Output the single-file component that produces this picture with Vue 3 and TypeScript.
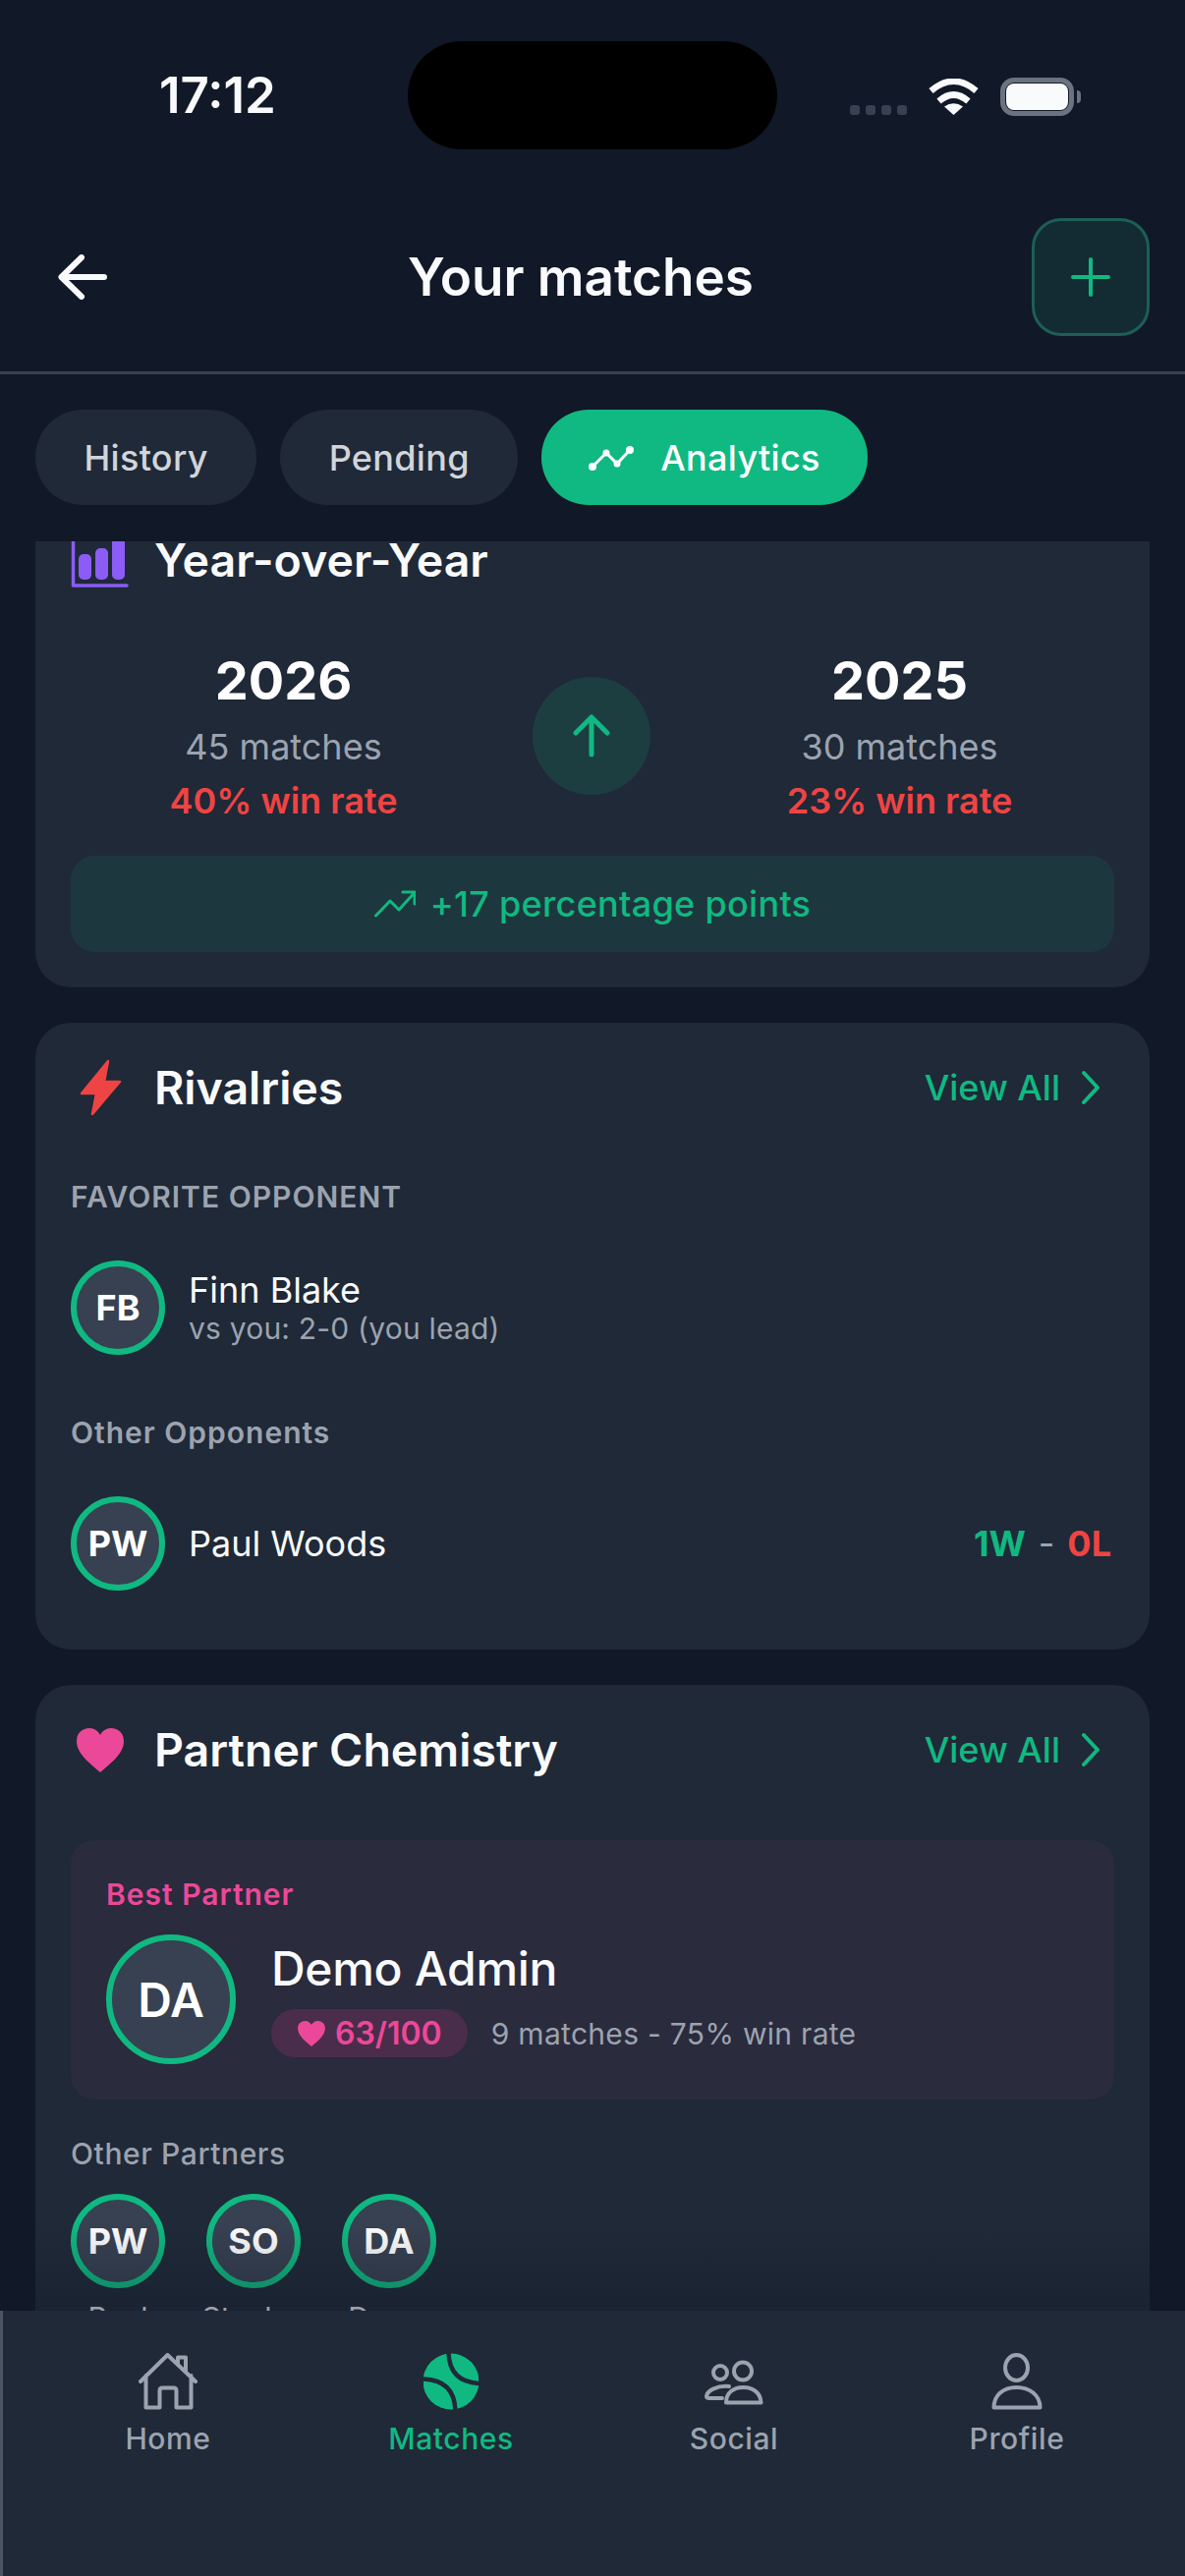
<script setup lang="ts">
interface Tab { label: string; active?: boolean }
const tabs: Tab[] = [{ label: 'History' }, { label: 'Pending' }, { label: 'Analytics', active: true }]
const years = [
  { year: '2026', matches: '45 matches', rate: '40% win rate' },
  { year: '2025', matches: '30 matches', rate: '23% win rate' },
]
const partners = [
  { initials: 'PW', name: 'Paul' },
  { initials: 'SO', name: 'Stanley' },
  { initials: 'DA', name: 'Demo' },
]
const nav = ['Home', 'Matches', 'Social', 'Profile']
</script>

<template>
  <div class="app">
    <div class="status">
      <span class="time">17:12</span>
      <div class="island"></div>
      <div class="status-right">
        <div class="signal"><i></i><i></i><i></i><i></i></div>
        <svg class="wifi" width="51" height="37" viewBox="0 0 51 37" fill="none">
          <path d="M2.500 12.500Q25.500 -7 48.500 12.500" stroke="#f8fafc" stroke-width="6.500" />
          <path d="M10.500 23Q25.500 10 40.500 23" stroke="#f8fafc" stroke-width="6.500" />
          <path d="M25.500 37L16 28.500Q25.500 22 35 28.500Z" fill="#f8fafc" />
        </svg>
        <div class="battery"><div class="battery-fill"></div></div>
      </div>
    </div>

    <header class="header">
      <div class="back">
        <svg width="50" height="46" viewBox="0 0 50 46" fill="none" stroke="#f9fafb" stroke-width="6" stroke-linecap="round" stroke-linejoin="round">
          <path d="M3.500 23H47M24 3L3.500 23L24 43" />
        </svg>
      </div>
      <h1 class="title">Your matches</h1>
      <button class="add">
        <svg width="40" height="40" viewBox="0 0 40 40" stroke="#10b981" stroke-width="4" stroke-linecap="round">
          <path d="M20 2V38M2 20H38" />
        </svg>
      </button>
    </header>

    <nav class="tabs">
      <div v-for="t in tabs" :key="t.label" class="tab" :class="{ active: t.active }">
        <svg v-if="t.active" width="48" height="30" viewBox="0 0 48 30" fill="#fff" stroke="#fff" stroke-width="3">
          <path d="M5 24L19 10L30 21L43 7" fill="none" />
          <circle cx="5" cy="24" r="2.500" /><circle cx="19" cy="10" r="2" /><circle cx="30" cy="21" r="2" /><circle cx="43" cy="7" r="2.500" />
        </svg>
        <span>{{ t.label }}</span>
      </div>
    </nav>

    <main class="scroll">
      <div class="list">
        <section class="card">
          <div class="card-head">
            <div class="card-icon">
              <svg width="60" height="60" viewBox="0 0 60 60" fill="#8b5cf6">
                <path d="M2.500 6V56H57" fill="none" stroke="#8b5cf6" stroke-width="3.500" stroke-linecap="round" stroke-linejoin="round" />
                <rect x="8" y="24" width="13" height="26" rx="5" />
                <rect x="25" y="18" width="13" height="32" rx="5" />
                <rect x="42" y="7" width="13" height="43" rx="5" />
              </svg>
            </div>
            <h2 class="card-title">Year-over-Year</h2>
          </div>
          <div class="compare">
            <div class="year" :class="{ last: i === 1 }" v-for="(y, i) in years" :key="y.year">
              <div class="year-num">{{ y.year }}</div>
              <div class="year-matches">{{ y.matches }}</div>
              <div class="year-rate">{{ y.rate }}</div>
            </div>
            <div class="up">
              <svg width="40" height="44" viewBox="0 0 40 44" fill="none" stroke="#10b981" stroke-width="5" stroke-linecap="round" stroke-linejoin="round">
                <path d="M20 41V3M4 19L20 3L36 19" />
              </svg>
            </div>
          </div>
          <div class="banner">
            <svg width="42" height="28" viewBox="0 0 42 28" fill="none" stroke="#10b981" stroke-width="3" stroke-linecap="round" stroke-linejoin="round">
              <path d="M1.500 26L16 11L25 20L40.500 3M29 2H41V14" />
            </svg>
            <span>+17 percentage points</span>
          </div>
        </section>

        <section class="card tall">
          <div class="card-head">
            <div class="card-icon">
              <svg width="44" height="60" viewBox="0 0 44 60" fill="#ef4444" stroke="#ef4444" stroke-width="2.500" stroke-linejoin="round">
                <path d="M30 3L3 36H18L14 57L42 24H26Z" />
              </svg>
            </div>
            <h2 class="card-title">Rivalries</h2>
            <div class="view-all">
              <span>View All</span>
              <svg width="24" height="36" viewBox="0 0 24 36" fill="none" stroke="#10b981" stroke-width="4" stroke-linecap="round" stroke-linejoin="round">
                <path d="M4 3L18 18L4 33" />
              </svg>
            </div>
          </div>
          <div class="caps">FAVORITE OPPONENT</div>
          <div class="person">
            <div class="avatar">FB</div>
            <div>
              <div class="person-name">Finn Blake</div>
              <div class="person-sub">vs you: 2-0 (you lead)</div>
            </div>
          </div>
          <div class="sub-title opponents">Other Opponents</div>
          <div class="person">
            <div class="avatar">PW</div>
            <div class="person-name">Paul Woods</div>
            <div class="record"><span class="win">1W</span><span class="dash">-</span><span class="loss">0L</span></div>
          </div>
        </section>

        <section class="card tall">
          <div class="card-head">
            <div class="card-icon">
              <svg width="48" height="45" viewBox="0 0 48 45" fill="#ec4899">
                <path d="M24 45C10 33 0 25 0 13C0 5 6 0 13 0C18 0 22 3 24 7C26 3 30 0 35 0C42 0 48 5 48 13C48 25 38 33 24 45Z" />
              </svg>
            </div>
            <h2 class="card-title">Partner Chemistry</h2>
            <div class="view-all">
              <span>View All</span>
              <svg width="24" height="36" viewBox="0 0 24 36" fill="none" stroke="#10b981" stroke-width="4" stroke-linecap="round" stroke-linejoin="round">
                <path d="M4 3L18 18L4 33" />
              </svg>
            </div>
          </div>
          <div class="best">
            <div class="best-label">Best Partner</div>
            <div class="best-row">
              <div class="avatar large">DA</div>
              <div>
                <div class="best-name">Demo Admin</div>
                <div class="best-meta">
                  <div class="pill">
                    <svg width="28" height="26" viewBox="0 0 48 45" fill="#ec4899">
                      <path d="M24 45C10 33 0 25 0 13C0 5 6 0 13 0C18 0 22 3 24 7C26 3 30 0 35 0C42 0 48 5 48 13C48 25 38 33 24 45Z" />
                    </svg>
                    <span>63/100</span>
                  </div>
                  <span class="meta-text">9 matches - 75% win rate</span>
                </div>
              </div>
            </div>
          </div>
          <div class="sub-title partners-title">Other Partners</div>
          <div class="partners">
            <div class="partner" v-for="p in partners" :key="p.name">
              <div class="avatar">{{ p.initials }}</div>
              <div class="partner-name">{{ p.name }}</div>
            </div>
          </div>
        </section>
      </div>
      <div class="fade"></div>
    </main>

    <footer class="nav">
      <div class="nav-item" v-for="n in nav" :key="n" :class="{ active: n === 'Matches' }">
        <div class="nav-icon">
          <svg v-if="n === 'Home'" width="60" height="58" viewBox="0 0 60 58" fill="none" stroke="#9ca3af" stroke-width="4" stroke-linecap="round" stroke-linejoin="round">
            <path d="M2 29L29.500 2L58 29M7.500 23V55.500H21.500V38.500Q21.500 35.500 24.500 35.500H35.500Q38.500 35.500 38.500 38.500V55.500H53.500V23M40 11V4.500H48V19" />
          </svg>
          <svg v-else-if="n === 'Matches'" width="56" height="58" viewBox="0 0 56 58" fill="none">
            <circle cx="28" cy="29" r="28.500" fill="#10b981" />
            <path d="M25.500 -1Q26 30 58 31M-1 26.500Q32 27 32.500 60" stroke="#1f2937" stroke-width="4.500" />
          </svg>
          <svg v-else-if="n === 'Social'" width="60" height="58" viewBox="0 0 60 58" fill="none" stroke="#9ca3af" stroke-width="4" stroke-linecap="round" stroke-linejoin="round">
            <circle cx="39" cy="18.500" r="9" />
            <circle cx="16" cy="20" r="7" />
            <path d="M22 50.500C22 40 30 35 39.500 35C49 35 57 40 57.500 50.500Z" />
            <path d="M25 34C13 33 3 38 2 44C2 46 3 46 5 46H18" />
          </svg>
          <svg v-else width="52" height="58" viewBox="0 0 52 58" fill="none" stroke="#9ca3af" stroke-width="4" stroke-linecap="round" stroke-linejoin="round">
            <ellipse cx="25.500" cy="15" rx="11.500" ry="13" />
            <path d="M2.500 55.500C2.500 43 12 35 25.500 35C39 35 49.500 43 49.500 55.500Z" />
          </svg>
        </div>
        <span class="nav-label">{{ n }}</span>
      </div>
    </footer>
  </div>
</template>

<style>
html, body { margin: 0; background: #111827; }
</style>

<style scoped>
.app {
  width: 1206px;
  height: 2622px;
  display: flex;
  flex-direction: column;
  overflow: hidden;
  background: #111827;
  color: #f9fafb;
  font-family: Inter, "Noto Sans", sans-serif;
}
.status {
  position: relative;
  height: 180px;
  flex: none;
  display: flex;
  box-sizing: border-box;
  padding: 66px 113px 0 162px;
}
.time { font-size: 51px; font-weight: 600; line-height: 62px; color: #f9fafb; }
.island {
  position: absolute;
  left: 415px;
  top: 42px;
  width: 376px;
  height: 110px;
  border-radius: 55px;
  background: #000;
}
.status-right { margin-left: auto; height: 40px; margin-top: 12px; display: flex; align-items: flex-end; }
.signal { display: flex; gap: 6px; margin-bottom: 1px; }
.signal i { width: 10px; height: 10px; border-radius: 3px; background: #374151; }
.wifi { margin: 0 22px 1px 22px; }
.battery {
  position: relative;
  box-sizing: border-box;
  width: 75px;
  height: 39px;
  border: 5px solid #6b7280;
  border-radius: 14px;
  padding: 1px;
}
.battery::after {
  content: "";
  position: absolute;
  left: 73px;
  top: 8px;
  width: 4px;
  height: 13px;
  border-radius: 0 4px 4px 0;
  background: #6b7280;
}
.battery-fill { height: 100%; border-radius: 8px; background: #f8fafc; }

.header {
  flex: none;
  display: flex;
  align-items: center;
  box-sizing: border-box;
  height: 201px;
  padding: 42px 36px 36px;
  border-bottom: 3px solid #374151;
}
.back { width: 96px; padding-left: 23px; box-sizing: border-box; display: flex; }
.title { flex: 1; margin: 0; text-align: center; font-size: 53px; font-weight: 600; line-height: 66px; }
.add {
  width: 120px;
  height: 120px;
  box-sizing: border-box;
  padding: 0;
  display: flex;
  align-items: center;
  justify-content: center;
  border: 3px solid #1d5f55;
  border-radius: 30px;
  background: #132b33;
}

.tabs { flex: none; display: flex; gap: 24px; padding: 36px 36px 37px; }
.tab {
  height: 97px;
  display: flex;
  align-items: center;
  gap: 26px;
  padding: 0 49.5px;
  border-radius: 48px;
  background: #1f2937;
  color: #d1d5db;
  font-size: 36px;
  font-weight: 500;
  letter-spacing: 0.3px;
}
.tab.active { background: #10b981; color: #fff; padding: 0 48px 0 47px; }

.scroll { position: relative; flex: 1; min-height: 0; overflow: hidden; }
.list { margin-top: -47px; padding: 0 36px; display: flex; flex-direction: column; gap: 36px; }
.card {
  background: #1f2937;
  border-radius: 36px;
  padding: 36px;
}
.card.tall { padding-bottom: 60px; }
.card-head { display: flex; align-items: center; height: 60px; gap: 25px; }
.card-icon { width: 60px; height: 60px; flex: none; display: flex; align-items: center; justify-content: center; }
.card-title { margin: 0; font-size: 46.5px; font-weight: 600; line-height: 60px; color: #f9fafb; }
.view-all {
  margin-left: auto;
  margin-right: 11px;
  display: flex;
  align-items: center;
  gap: 20px;
  color: #10b981;
  font-size: 36px;
  font-weight: 500;
}

.compare { margin-top: 60px; padding: 0 3px 0 1px; display: flex; align-items: center; gap: 38px; }
.year { flex: 1; text-align: center; }
.year.last { order: 2; }
.up { order: 1; }
.year-num { font-size: 54px; font-weight: 700; line-height: 66px; color: #fff; }
.year-matches { margin-top: 12px; font-size: 36px; line-height: 44px; color: #9ca3af; }
.year-rate { margin-top: 11px; font-size: 36px; font-weight: 600; line-height: 44px; color: #ef4444; }
.up {
  width: 120px;
  height: 120px;
  flex: none;
  border-radius: 50%;
  background: rgba(16, 185, 129, 0.15);
  display: flex;
  align-items: center;
  justify-content: center;
}
.banner {
  margin-top: 34px;
  height: 98px;
  border-radius: 24px;
  background: rgba(16, 185, 129, 0.1);
  display: flex;
  align-items: center;
  justify-content: center;
  gap: 15px;
  color: #10b981;
  font-size: 36px;
  font-weight: 500;
  letter-spacing: 0.3px;
}

.caps { margin-top: 63px; font-size: 30px; font-weight: 600; line-height: 36px; letter-spacing: 1px; color: #9ca3af; }
.sub-title { font-size: 30px; font-weight: 600; line-height: 36px; color: #9ca3af; }
.opponents { margin-top: 61px; letter-spacing: 1px; }
.person { margin-top: 47px; display: flex; align-items: center; gap: 24px; }
.avatar {
  width: 96px;
  height: 96px;
  flex: none;
  box-sizing: border-box;
  border: 6px solid #10b981;
  border-radius: 50%;
  background: #374151;
  display: flex;
  align-items: center;
  justify-content: center;
  color: #fff;
  font-size: 36px;
  font-weight: 700;
}
.person-name { font-size: 36px; font-weight: 400; line-height: 42px; color: #f9fafb; }
.person-sub { font-size: 30px; line-height: 36px; color: #9ca3af; letter-spacing: 0.2px; }
.record { margin-left: auto; margin-right: 3px; font-size: 36px; font-weight: 700; }
.win { color: #10b981; }
.dash { margin: 0 13px; color: #9ca3af; font-weight: 400; }
.loss { color: #ef4444; }

.best {
  margin-top: 62px;
  height: 264px;
  box-sizing: border-box;
  padding: 37px 36px;
  border-radius: 24px;
  background: #2a2b3d;
}
.best-label { font-size: 30px; font-weight: 600; line-height: 36px; letter-spacing: 1px; color: #ec4899; }
.best-row { margin-top: 23px; display: flex; align-items: flex-start; gap: 36px; }
.avatar.large { width: 132px; height: 132px; font-size: 48px; font-weight: 600; }
.best-name { margin-top: 6px; font-size: 48px; font-weight: 500; line-height: 58px; letter-spacing: -0.3px; color: #f9fafb; }
.best-meta { margin-top: 12px; display: flex; align-items: center; gap: 24px; }
.pill {
  height: 49px;
  display: flex;
  align-items: center;
  gap: 10px;
  padding: 0 26px 0 27px;
  border-radius: 25px;
  background: #4a2d4a;
  color: #ec4899;
  font-size: 32px;
  font-weight: 600;
}
.meta-text { font-size: 30px; color: #9ca3af; letter-spacing: 0.3px; }
.partners-title { margin-top: 37px; letter-spacing: 0.6px; font-weight: 500; }
.partners { margin-top: 23px; display: flex; gap: 42px; }
.partner { width: 96px; display: flex; flex-direction: column; align-items: center; }
.partner-name { margin-top: 12px; font-size: 30px; line-height: 36px; white-space: nowrap; color: #e5e7eb; }
.fade {
  position: absolute;
  left: 0;
  right: 0;
  bottom: 0;
  height: 90px;
  background: linear-gradient(to bottom, rgba(17, 24, 39, 0), rgba(17, 24, 39, 0.35));
}

.nav {
  flex: none;
  height: 270px;
  box-sizing: border-box;
  border-left: 3px solid #4b5563;
  background: #1f2937;
  padding: 43px 27px 0 24px;
  display: grid;
  grid-template-columns: repeat(4, 288px);
}
.nav-item { display: flex; flex-direction: column; align-items: center; color: #9ca3af; }
.nav-item.active { color: #10b981; }
.nav-icon { height: 58px; display: flex; justify-content: center; }
.nav-label { margin-top: 11px; font-size: 30px; font-weight: 500; line-height: 36px; letter-spacing: 0.6px; }
</style>
